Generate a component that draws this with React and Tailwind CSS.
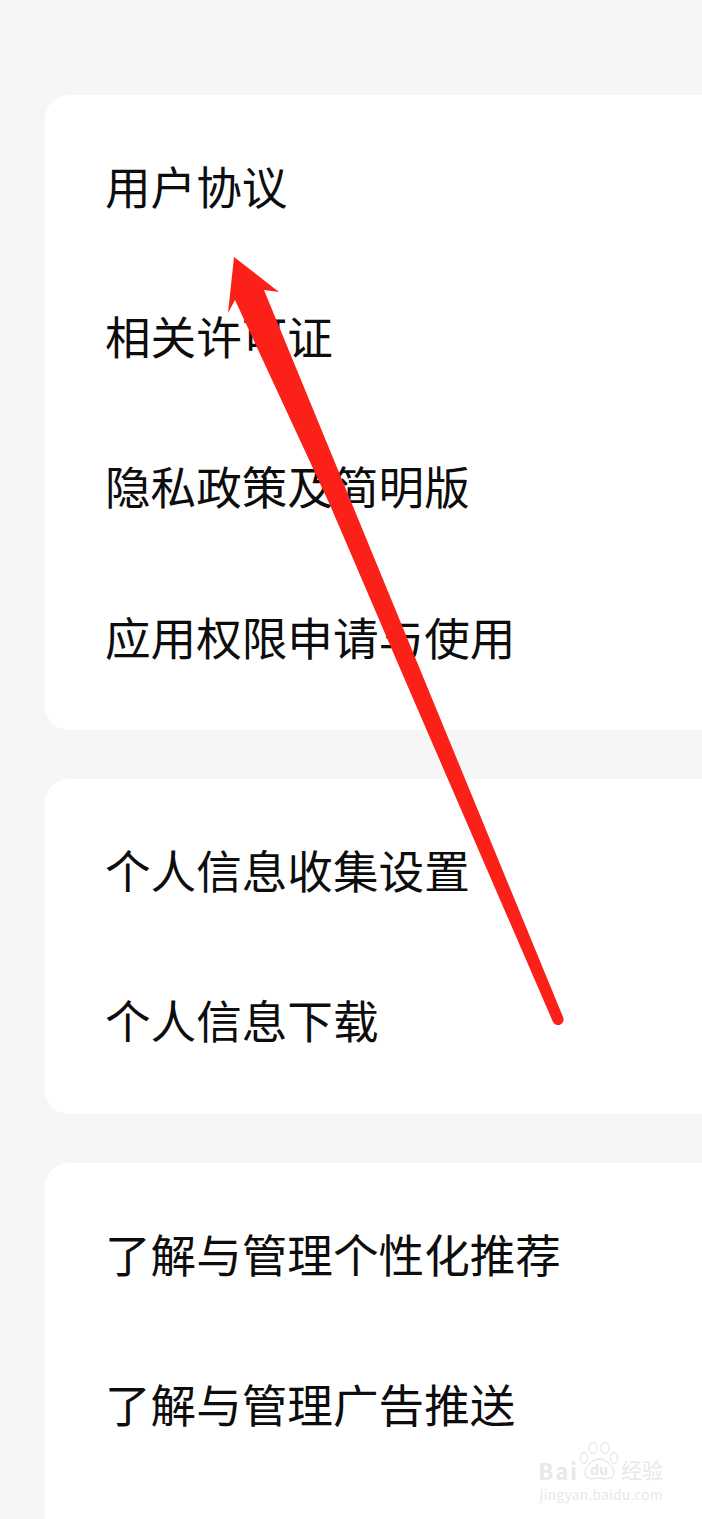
import React from "react";

const groups = [
  ["用户协议", "相关许可证", "隐私政策及简明版", "应用权限申请与使用"],
  ["个人信息收集设置", "个人信息下载"],
  ["了解与管理个性化推荐", "了解与管理广告推送", ""],
];

const Row = ({ label }) => (
  <div className="h-[150.3px] flex items-center pl-[60px] pb-[3px] text-[45.6px] leading-none text-[#0d0d0d] whitespace-nowrap">
    {label}
  </div>
);

const Arrow = () => (
  <svg className="absolute left-0 top-0 pointer-events-none" width="702" height="1519" viewBox="0 0 702 1519">
    <path
      d="M234 257 L279 292 L264 290 L563 1017 A5.5 5.5 0 0 1 553 1022 L405 680 L330 505 L235 300 L228 313 Z"
      fill="#fb2018"
    />
  </svg>
);

const Watermark = () => (
  <div className="absolute right-[39px] bottom-[18px] flex flex-col items-end gap-[8px] text-[#e8e8e8] pointer-events-none">
    <div className="flex items-end">
      <span className="text-[22px] leading-[20px] font-bold tracking-[2px]">Bai</span>
      <svg width="40" height="38" viewBox="0 0 40 38" fill="none" stroke="currentColor" strokeWidth="1.3">
        <ellipse cx="5" cy="16" rx="3.5" ry="5.5" />
        <ellipse cx="14" cy="6" rx="4" ry="5.5" />
        <ellipse cx="26" cy="6" rx="4" ry="5.5" />
        <ellipse cx="35" cy="16" rx="3.5" ry="5.5" />
        <path d="M6 31 C6 24 14 17 20 17 C27 17 35 24 35 31 C35 38 26 37 20 36 C14 37 6 38 6 31 Z" />
        <text x="20" y="33" textAnchor="middle" fontSize="14" fontWeight="700" fill="currentColor" stroke="none">du</text>
      </svg>
      <span className="ml-[2px] text-[21px] leading-[22px]">经验</span>
    </div>
    <span className="text-[13.5px] leading-none tracking-[0.4px] whitespace-nowrap">jingyan.baidu.com</span>
  </div>
);

export default function App() {
  return (
    <div
      className="relative w-[702px] h-[1519px] overflow-hidden bg-[#f6f6f6] pt-[95px] pl-[45px]"
      style={{ fontFamily: '"Noto Sans CJK SC", "Liberation Sans", sans-serif' }}
    >
      <div className="flex flex-col gap-[49px]">
        {groups.map((rows, i) => (
          <div key={i} className="bg-white rounded-l-[24px] py-[17px]">
            {rows.map((label, j) => (
              <Row key={j} label={label} />
            ))}
          </div>
        ))}
      </div>
      <Arrow />
      <Watermark />
    </div>
  );
}
